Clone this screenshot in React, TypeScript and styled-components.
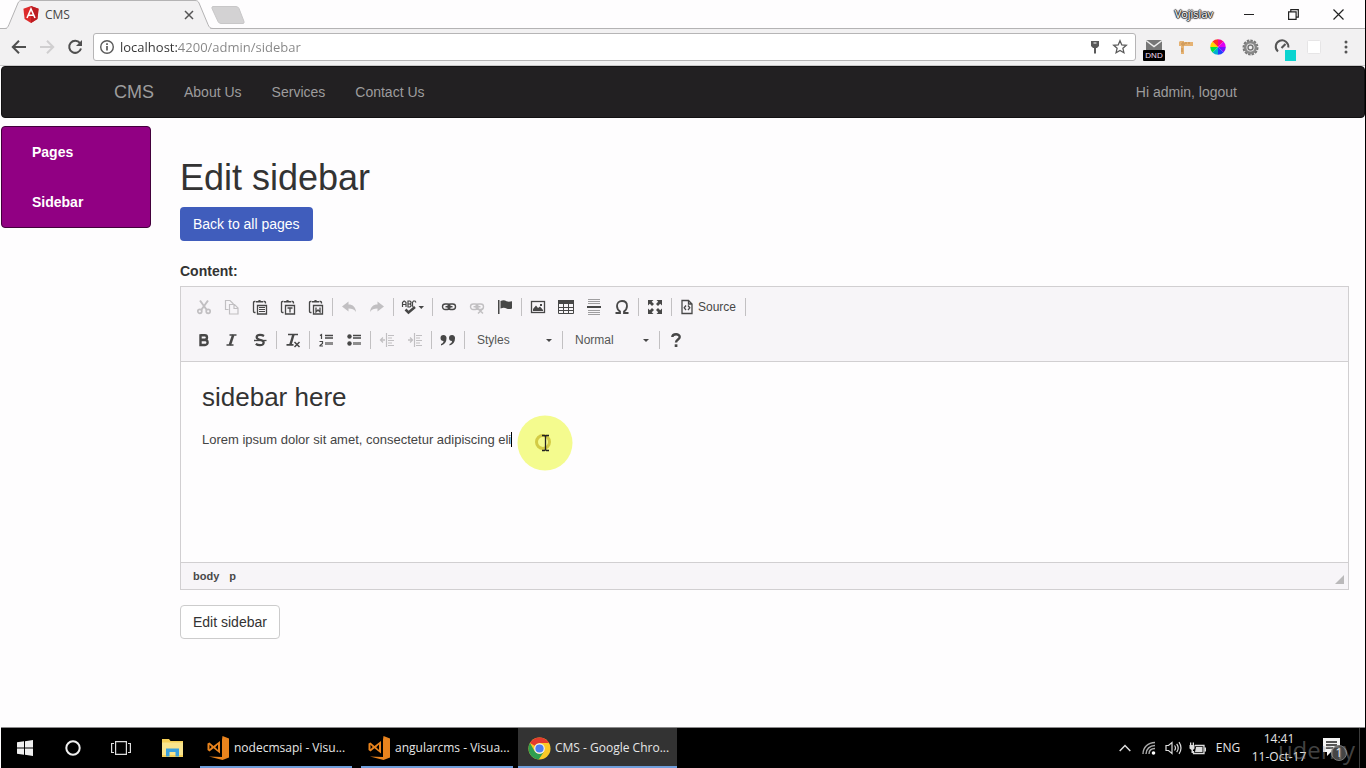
import React from "react";
import styled, { createGlobalStyle, css } from "styled-components";

const PAGE_FONT = `"Liberation Sans", Arial, sans-serif`;
const UI_FONT = `"Open Sans", "Noto Sans", sans-serif`;

const GlobalStyle = createGlobalStyle`
  *, *::before, *::after { box-sizing: border-box; }
  body { margin: 0; background: #fefdfe; font-family: ${PAGE_FONT}; font-size: 14px; line-height: 20px; color: #333; }
  button, input, select { font: inherit; color: inherit; margin: 0; }
  svg { display: block; flex: none; }
`;

const Screen = styled.div`
  display: flex;
  flex-direction: column;
  min-height: 100vh;
  overflow: hidden;
  border-right: 1px solid #000;
`;

/* ---------- browser chrome ---------- */

const TabStrip = styled.header`
  display: flex;
  height: 29px;
  border-bottom: 1px solid #b4b3b4;
  font: 12px/28px ${UI_FONT};
`;

const Tab = styled.div`
  position: relative;
  display: flex;
  align-items: center;
  width: 211px;
  height: 29px;
  padding: 0 16px 0 23px;
  gap: 6px;
  > * { position: relative; }
`;

const TabShape = styled.svg`
  && { position: absolute; left: 0; top: 0; }
`;

const TabTitle = styled.span`
  flex: 1;
  color: #444;
`;

const BareButton = styled.button`
  display: flex;
  align-items: center;
  justify-content: center;
  padding: 0;
  border: 0;
  background: none;
`;

const NewTab = styled(BareButton)`
  width: 34px;
  height: 30px;
`;

const WindowControls = styled.div`
  display: flex;
  align-items: center;
  margin-left: auto;
  padding-right: 4px;
  height: 28px;
`;

const ProfileName = styled.span`
  margin-right: 13px;
  font: 11px/16px ${UI_FONT};
  color: #fff;
  text-shadow: 0 0 1px #222, 1px 0 1px #222, -1px 0 1px #222, 0 1px 1px #333, 0 -1px 1px #333;
`;

const WindowButton = styled(BareButton)`
  width: 45px;
  height: 26px;
`;

const AddressBar = styled.div`
  display: flex;
  align-items: center;
  height: 37px;
  padding: 0 3px 0 5px;
  background: #f2f1f2;
  border-bottom: 1px solid #c9c8c9;
`;

const NavButton = styled(BareButton)`
  width: 28px;
  height: 28px;
`;

const Omnibox = styled.label`
  display: flex;
  flex: 1;
  align-items: center;
  height: 28px;
  margin: 0 2px 0 4px;
  padding: 0 4px 0 5px;
  gap: 5px;
  background: #fff;
  border: 1px solid #b6b5b6;
  border-radius: 3px;
`;

const UrlInput = styled.input`
  flex: 1;
  min-width: 0;
  padding: 0;
  border: 0;
  outline: 0;
  font: 13px/20px ${UI_FONT};
  color: #777;
  background: linear-gradient(to right, #333 57px, #858585 57px);
  background-clip: text;
  -webkit-text-fill-color: transparent;
`;

const Extension = styled(BareButton)`
  width: 32px;
  height: 28px;
`;

/* ---------- web page ---------- */

const Navbar = styled.nav`
  height: 52px;
  margin-left: 1px;
  background: #222022;
  border: 1px solid #121112;
  border-radius: 4px;
`;

const Container = styled.div`
  display: flex;
  max-width: 1170px;
  margin: 0 auto;
  padding: 0 16px;
`;

const NavLink = styled.a<{ $brand?: boolean; $end?: boolean }>`
  padding: 15px;
  line-height: 20px;
  text-decoration: none;
  color: #9d9c9d;
  ${(p) => p.$brand && css`padding-left: 0; font-size: 18px;`}
  ${(p) => p.$end && css`margin-left: auto;`}
`;

const Body = styled.div`
  display: flex;
  flex: 1;
  align-items: flex-start;
  padding: 8px 16px 32px 1px;
  gap: 29px;
`;

const SideMenu = styled.nav`
  display: flex;
  flex: none;
  flex-direction: column;
  width: 150px;
  background: #910083;
  border: 1px solid #43003c;
  border-radius: 4px;
`;

const SideLink = styled.a`
  padding: 15px 30px;
  font-weight: bold;
  color: #fff;
  text-decoration: none;
`;

const Main = styled.main`
  flex: 1;
  min-width: 0;
  padding-top: 32px;
`;

const Title = styled.h1`
  margin: 0 0 9px;
  font-size: 36px;
  font-weight: normal;
  line-height: 40px;
`;

const BackLink = styled.a`
  display: inline-block;
  padding: 7px 13px;
  border-radius: 4px;
  background: #405dbc;
  color: #fff;
  text-decoration: none;
`;

const FieldLabel = styled.div`
  margin: 20px 0 5px;
  font-weight: bold;
`;

const Editor = styled.section`
  border: 1px solid #d1cfd1;
`;

const Toolbar = styled.div`
  display: flex;
  flex-direction: column;
  gap: 5px;
  padding: 6px 9px 7px;
  background: #f7f5f8;
  border-bottom: 1px solid #d1cfd1;
  font-size: 12px;
`;

const ToolRow = styled.div`
  display: flex;
  align-items: center;
  height: 28px;
`;

const Separator = styled.span`
  width: 1px;
  height: 18px;
  margin: 0 2px;
  background: #c2c0c2;
`;

const ToolButton = styled.button<{ $width?: number }>`
  display: flex;
  flex: none;
  align-items: center;
  justify-content: center;
  gap: 5px;
  width: ${(p) => p.$width ?? 28}px;
  height: 28px;
  padding: 0;
  border: 0;
  background: none;
  color: #474747;
  &:disabled { opacity: 0.3; }
`;

const Combo = styled.label<{ $width: number }>`
  display: flex;
  align-items: center;
  width: ${(p) => p.$width}px;
  padding: 0 8px 0 10px;
  color: #555;
`;

const ComboSelect = styled.select`
  flex: 1;
  min-width: 0;
  padding: 0;
  border: 0;
  background: none;
  appearance: none;
`;

const EditArea = styled.div`
  position: relative;
  height: 200px;
  padding: 20px 21px;
  background: #fefdfe;
  font-size: 13px;
  outline: 0;
`;

const DocHeading = styled.h2`
  margin: 0 0 18px;
  font-size: 26px;
  font-weight: normal;
  line-height: 30px;
`;

const DocText = styled.p`
  margin: 0;
  color: #444;
`;

const Caret = styled.span`
  border-left: 1px solid #000;
`;

const Pointer = styled.svg`
  position: absolute;
  left: 336px;
  top: 53px;
`;

const StatusBar = styled.footer`
  display: flex;
  align-items: center;
  height: 27px;
  padding: 0 3px 0 12px;
  gap: 10px;
  background: #f7f5f8;
  border-top: 1px solid #d1cfd1;
  font-size: 11px;
  font-weight: bold;
  color: #484848;
  svg { margin: 8px 0 0 auto; }
`;

const SubmitButton = styled.button`
  margin-top: 15px;
  padding: 6px 12px;
  border: 1px solid #ccc;
  border-radius: 4px;
  background: #fff;
`;

/* ---------- taskbar ---------- */

const Taskbar = styled.footer`
  display: flex;
  height: 41px;
  margin-left: 1px;
  border-top: 1px solid #8b8a8b;
  background: #000;
  color: #e6e6e6;
  font: 12px/16px ${UI_FONT};
`;

const TaskIcon = styled(BareButton)<{ $width?: number }>`
  width: ${(p) => p.$width ?? 48}px;
`;

const TaskApp = styled.button<{ $active?: boolean; $gap: number }>`
  display: flex;
  align-items: center;
  justify-content: flex-start;
  width: ${(p) => (p.$active ? 159 : 152)}px;
  margin-left: ${(p) => p.$gap}px;
  padding: 2px 4px 0 ${(p) => (p.$active ? 10 : 6)}px;
  gap: 4px;
  border: 0;
  border-bottom: 2px solid #6f9edb;
  background: ${(p) => (p.$active ? "#333" : "#000")};
  white-space: nowrap;
`;

const Tray = styled.div`
  position: relative;
  display: flex;
  align-items: center;
  margin-left: auto;
  padding-right: 5px;
`;

const TrayItem = styled.span<{ $width: number }>`
  display: flex;
  justify-content: center;
  width: ${(p) => p.$width}px;
`;

const Clock = styled.time`
  width: 64px;
  line-height: 18px;
  text-align: center;
  white-space: nowrap;
`;

const ActionCenter = styled.span`
  display: flex;
  justify-content: center;
  width: 49px;
  height: 40px;
  align-items: center;
  border-right: 1px solid #3c3c3c;
`;

const Watermark = styled.span`
  position: absolute;
  right: 10px;
  top: 4px;
  color: rgba(160, 160, 160, 0.42);
  font: 24px/36px ${UI_FONT};
`;

/* ---------- toolbar icons ---------- */

const Ico = ({ children, w = 16 }: { children: React.ReactNode; w?: number }) => (
  <svg width={w} height="16" viewBox={`0 0 ${w} 16`} fill="none" stroke="currentColor" aria-hidden="true">
    {children}
  </svg>
);

const Solid = ({ d }: { d: string }) => <path d={d} fill="currentColor" stroke="none" />;

const Clipboard = ({ children }: { children: React.ReactNode }) => (
  <Ico>
    <path d="M3.500 13.500h-1a1 1 0 0 1-1-1v-9a1 1 0 0 1 1-1h1M11.500 2.500h1a1 1 0 0 1 1 1v1" strokeWidth="1.300" />
    <Solid d="M4 3.500V2h2a1.600 1.600 0 0 1 3 0h2v1.500z" />
    <path d="M5.500 6.500h9v8.500h-9z" strokeWidth="1.300" />
    {children}
  </Ico>
);

const Cut = () => (
  <Ico>
    <path d="M4 1.500 10.800 11M12 1.500 5.200 11" strokeWidth="2" />
    <circle cx="3.800" cy="12.300" r="2" strokeWidth="1.700" />
    <circle cx="12.200" cy="12.300" r="2" strokeWidth="1.700" />
  </Ico>
);
const Copy = () => (
  <Ico>
    <path d="M4.500 10.500H1.500v-9H6L9.500 5M5.500 5.500h5l3.500 3.500v6H5.500zM10 5.500v4h4" strokeWidth="1.200" />
  </Ico>
);
const Undo = ({ flip }: { flip?: boolean }) => (
  <Ico>
    <g transform={flip ? "matrix(-1 0 0 1 16 0)" : undefined}>
      <Solid d="M1 7.500 7.500 2.500v3c4.500 0 7 2.500 7.500 7.500-1.800-2.800-4-3.500-7.500-3.500v3z" />
    </g>
  </Ico>
);
const Spell = () => (
  <Ico w={24}>
    <path d="M1.500 8V3.500L3 2h.5L5 3.500V8M1.500 5.500H5M7 8V2h2l1 1v1L9 5l1 1v1L9 8zM7 5h2M15 3.500 14 2h-1.500L11.500 3.500v3l.5 1.500" strokeWidth="1.200" />
    <path d="m4.500 10.500 3 3L14 8" strokeWidth="2.500" />
    <Solid d="M17.500 7h5.500l-2.700 3z" />
  </Ico>
);
const Link = ({ off }: { off?: boolean }) => (
  <Ico>
    <rect x="1.500" y="5" width="7.500" height="5.500" rx="2.700" strokeWidth="1.400" />
    <rect x="7" y="5" width="7.500" height="5.500" rx="2.700" strokeWidth="1.400" />
    <path d="M4.500 7.700h7" strokeWidth="1.500" />
    {off && <path d="m9 9.500 5 5M14 9.500l-5 5" strokeWidth="1.500" />}
  </Ico>
);
const Flag = () => (
  <Ico>
    <Solid d="M1 1h1.500v14H1zM3.500 2c3-1.200 4.500-.5 6 .2 1.500.6 3 .6 5.500 0v7.300c-2.500.8-4 .6-5.500 0-1.500-.7-3-1.200-6 0z" />
  </Ico>
);
const Picture = () => (
  <Ico>
    <rect x="1.500" y="2.500" width="13" height="11" strokeWidth="1.300" />
    <Solid d="M3 12V10l3-3.500 2 2.500 2-1.500 3 3.500v1zM10 5h2v2h-2z" />
  </Ico>
);
const TableIcon = () => (
  <Ico>
    <Solid d="M0 1h16v4H0z" />
    <path d="M.5 2v12.500h15V2M5.500 5v9.500M10.500 5v9.500M.5 8.500h15M.5 11.500h15" />
  </Ico>
);
const Rule = () => (
  <Ico>
    <path d="M2 .5h12M2 2.500h12M2 4.500h12M2 11.500h12M2 13.500h12M2 15.500h12" opacity=".5" />
    <path d="M1 8h14" strokeWidth="2" />
  </Ico>
);
const Omega = () => (
  <Ico>
    <path d="M1.500 14H6v-1.500C4 11 3 9.500 3 7c0-3 2-5 5-5s5 2 5 5c0 2.500-1 4-3 5.500V14h4.500" strokeWidth="1.800" />
  </Ico>
);
const Expand = () => (
  <Ico>
    <Solid d="M1 1h5.500L4.700 2.800 7 5 5 7 2.800 4.700 1 6.500zM15 1v5.500l-1.800-1.800L11 7 9 5l2.200-2.200L9.500 1zM1 15V9.500l1.800 1.800L5 9l2 2-2.300 2.200L6.500 15zM15 15H9.500l1.700-1.800L9 11l2-2 2.200 2.300L15 9.500z" />
  </Ico>
);
const SourceIcon = () => (
  <Ico w={12}>
    <path d="M1 1.500h6.500L11 5v9.500H1zM7.500 1.500V5H11" strokeWidth="1.300" />
    <path d="M5 6.500 3.200 8.800 5 11M7 6.500l1.800 2.300L7 11" strokeWidth="1.300" />
  </Ico>
);
const Bold = () => (
  <Ico>
    <path d="M4.500 3.200h4.300a2.200 2.200 0 0 1 0 4.400H4.500M4.500 8h4.600a2.500 2.500 0 0 1 0 5H4.500zM4.500 2.200v11.600" strokeWidth="2.400" />
  </Ico>
);
const Italic = () => (
  <Ico>
    <path d="M5.500 3h7M2.500 13h7" strokeWidth="1.600" />
    <path d="M9.200 3 5.900 13" strokeWidth="2.500" />
  </Ico>
);
const Strike = () => (
  <Ico>
    <path d="M12 4C10.500 3 9.500 2.800 8 2.800c-4 0-4.500 3.700-1 4.700l2.500.8c3.500 1.200 2.500 4.900-1.500 4.900-1.500 0-3-.4-4.200-1.400" strokeWidth="2.200" />
    <path d="M2 8.500h12.500" strokeWidth="1.300" />
  </Ico>
);
const ClearFormat = () => (
  <Ico>
    <path d="M3 2.500h10M1.500 12.800h7" strokeWidth="1.700" />
    <path d="M8.500 2.500 5.300 13" strokeWidth="2.500" />
    <path d="m9.500 10 5 5M14.500 10l-5 5" strokeWidth="1.500" />
  </Ico>
);
const ListIcon = ({ numbered }: { numbered?: boolean }) => (
  <Ico>
    {numbered ? (
      <path d="M2 3.500 3.500 2.500V7M1.500 9.500h3v2l-2.500 2v.5h3" strokeWidth="1.200" />
    ) : (
      <g fill="currentColor" stroke="none"><circle cx="3.500" cy="4.500" r="2.200" /><circle cx="3.500" cy="11.500" r="2.200" /></g>
    )}
    <path d="M7 3.500h8M7 6h8" strokeWidth="1.300" />
    <path d="M7 11.500h8" strokeWidth="3" opacity=".6" />
  </Ico>
);
const Indent = ({ out }: { out?: boolean }) => (
  <Ico>
    <path d="M7.500 1v14M9 3.500h6M9 6h4M9 8.500h6M9 11h4M9 13.500h6" strokeWidth="1.200" />
    <path d={out ? "M6 8H1.500M4 5.500 1.500 8 4 10.500" : "M1 8h4.500M3 5.500 5.500 8 3 10.500"} strokeWidth="1.300" />
  </Ico>
);
const Quote = () => (
  <Ico>
    <Solid d="M3.500 3A3 3 0 0 1 6.500 6.500C6.500 10 4.500 12.500 1 13.500V12c1.800-.8 2.500-1.600 2.500-3a3 3 0 0 1 0-6zM12 3a3 3 0 0 1 3 3.500c0 3.500-2 6-5.500 7V12c1.800-.8 2.500-1.600 2.500-3a3 3 0 0 1 0-6z" />
  </Ico>
);
const Help = () => (
  <Ico>
    <path d="M4.300 5C4.500 1.500 11.700 1.300 11.700 5 11.700 7.500 8 7.500 8 10.500" strokeWidth="2.400" />
    <Solid d="M6.700 12.300h2.700v2.700H6.700z" />
  </Ico>
);
const Arrow = () => (
  <svg width="6" height="3" viewBox="0 0 6 3" fill="#474747" aria-hidden="true"><path d="M0 0h6L3 3z" /></svg>
);

/* ---------- taskbar icons ---------- */

const CodeLogo = () => (
  <svg width="24" height="24" viewBox="0 0 24 24" fill="#e8831d" aria-hidden="true">
    <path d="M16.500 0 23 2.500v19L16.500 24 3 20.500l13 .5V3.500zM14 5v12.500L7.500 12.300 3.500 15.500 1.500 14V7.500L3.500 6.500l4 3.400zM3.500 8.800v4.500l2.200-2.200zM12 8.500l-2.800 2.700L12 14z" fillRule="evenodd" />
  </svg>
);

const ChromeLogo = () => (
  <svg width="23" height="23" viewBox="0 0 24 24" aria-hidden="true">
    <circle cx="12" cy="12" r="11.500" fill="#fbc926" />
    <path d="M2 6.300A11.500 11.500 0 0 1 22 6.300H12A5.700 5.700 0 0 0 7 9.200z" fill="#e33b2e" />
    <path d="M2 6.300A11.500 11.500 0 0 0 11.200 23.500L16.900 14.900A5.700 5.700 0 0 1 7 14.800z" fill="#2f9e4f" />
    <circle cx="12" cy="12" r="5.500" fill="#f4f4f4" />
    <circle cx="12" cy="12" r="4.300" fill="#4d7df0" />
  </svg>
);

const AngularLogo = () => (
  <svg width="16" height="17" viewBox="0 0 16 17" aria-hidden="true">
    <path d="M8 0 15.600 2.700 14.400 13 8 17 1.600 13 .4 2.700z" fill="#dd2b2b" />
    <path d="M8 0v17l6.400-4 1.200-10.300z" fill="#bd1c22" />
    <path d="M4 12 8 3l4 9M5.800 9.300h4.400" fill="none" stroke="#fff" strokeWidth="1.600" />
  </svg>
);

export default function App() {
  return (
    <>
      <GlobalStyle />
      <Screen>
        <TabStrip>
          <Tab>
            <TabShape width="214" height="29" viewBox="0 0 214 29" aria-hidden="true">
              <path d="M0 28.500h5c2 0 3-1.500 4-4L18 3c1-2 2-2.500 4-2.500h173c2 0 3 .5 4 2.500l9 21.500c1 2.500 2 4 5 4V29H0z" fill="#f2f1f2" stroke="#b4b3b4" />
              <path d="M7 28.500h203" stroke="#f2f1f2" />
            </TabShape>
            <AngularLogo />
            <TabTitle>CMS</TabTitle>
            <BareButton aria-label="Close tab">
              <svg width="12" height="12" viewBox="0 0 12 12" stroke="#555" strokeWidth="1.500"><path d="m2 2 8 8M10 2l-8 8" /></svg>
            </BareButton>
          </Tab>
          <NewTab aria-label="New tab">
            <svg width="34" height="18" viewBox="0 0 34 18"><path d="M2 .5h23q2 0 3 2l5 13q.5 2-1 2H10q-2 0-3-2L1 2.500Q.5.500 2 .5z" fill="#d3d2d3" stroke="#c8c7c8" /></svg>
          </NewTab>
          <WindowControls>
            <ProfileName>Vojislav</ProfileName>
            <WindowButton aria-label="Minimize">
              <svg width="10" height="10" viewBox="0 0 10 10" stroke="#222"><path d="M0 5.500h10" /></svg>
            </WindowButton>
            <WindowButton aria-label="Restore">
              <svg width="11" height="11" viewBox="0 0 11 11" stroke="#222" strokeWidth="1.200" fill="none"><path d="M.6 2.800h7.500v7.500H.6zM2.800 2.500V.6h7.500v7.500H8.500" /></svg>
            </WindowButton>
            <WindowButton aria-label="Close">
              <svg width="11" height="11" viewBox="0 0 11 11" stroke="#222" strokeWidth="1.200"><path d="m.5.5 10 10M10.500.5l-10 10" /></svg>
            </WindowButton>
          </WindowControls>
        </TabStrip>

        <AddressBar>
          <NavButton aria-label="Back">
            <svg width="16" height="16" viewBox="0 0 16 16" fill="none" stroke="#4f4f4f" strokeWidth="2"><path d="M15 8H2.500M8 1.800 1.800 8 8 14.200" /></svg>
          </NavButton>
          <NavButton aria-label="Forward">
            <svg width="16" height="16" viewBox="0 0 16 16" fill="none" stroke="#d0cfd0" strokeWidth="2"><path d="M1 8h12.500M8 1.800 14.200 8 8 14.200" /></svg>
          </NavButton>
          <NavButton aria-label="Reload">
            <svg width="16" height="16" viewBox="0 0 16 16" fill="none" stroke="#4f4f4f" strokeWidth="2"><path d="M13 4.200A6 6 0 1 0 14 9.500" /><path d="M15 1v6H9z" fill="#4f4f4f" stroke="none" /></svg>
          </NavButton>
          <Omnibox>
            <svg width="16" height="16" viewBox="0 0 16 16" fill="none" stroke="#5a5a5a" strokeWidth="1.400" aria-hidden="true"><circle cx="8" cy="8" r="6.300" /><path d="M8 7v4.500M8 4.300V6" strokeWidth="1.700" /></svg>
            <UrlInput aria-label="Address" defaultValue="localhost:4200/admin/sidebar" />
            <svg width="10" height="14" viewBox="0 0 10 14" aria-hidden="true"><path d="M1 1h8v5L7 8H6v5.500H4V8H3L1 6z" fill="#5a5a5a" /><path d="M3.500 3h3" stroke="#fff" /></svg>
            <svg width="26" height="16" viewBox="-6 0 26 16" fill="none" stroke="#5a5a5a" strokeWidth="1.300" aria-hidden="true"><path d="m9 1.700 1.800 4.200 4.500.4-3.400 3 1 4.400L9 11.400l-3.900 2.300 1-4.400-3.400-3 4.500-.4z" /></svg>
          </Omnibox>
          <Extension aria-label="Mail checker">
            <svg width="22" height="28" viewBox="0 0 22 28">
              <path d="M3 7h16v10H3z" fill="#777" /><path d="m3 7.500 8 6 8-6" fill="none" stroke="#eee" strokeWidth="1.500" />
              <rect y="17" width="22" height="11" rx="1" fill="#000" />
              <text x="11" y="25" textAnchor="middle" fontSize="8" fontFamily="Liberation Sans, sans-serif" fill="#f3dff5">DND</text>
            </svg>
          </Extension>
          <Extension aria-label="Ruler">
            <svg width="16" height="16" viewBox="0 0 16 16"><path d="M2 2h4v1h9v4H6v8H3V7H1V3z" fill="#e5b273" /><path d="M4 4h2v2H4zM8 3v2M11 3v2M3 10h2M3 12h2" stroke="#c48b49" fill="#f5d4a5" /></svg>
          </Extension>
          <Extension aria-label="Color picker">
            <svg width="16" height="16" viewBox="-8 -8 16 16">
              {["#fa0090", "#e000f0", "#7a10ff", "#2040ff", "#00b0d0", "#00e040", "#ffd400", "#ff3020"].map((c, i) => (
                <path key={c} d="M0 0V-7.800A7.800 7.800 0 0 1 5.500-5.500z" fill={c} transform={`rotate(${i * 45})`} />
              ))}
            </svg>
          </Extension>
          <Extension aria-label="Settings">
            <svg width="17" height="17" viewBox="-8.500 -8.500 17 17" fill="none" stroke="#777">
              <circle r="6.500" strokeWidth="3" strokeDasharray="2.300 1" /><circle r="5.300" strokeWidth="2.500" stroke="#888" /><circle r="2.500" strokeWidth="1.500" />
            </svg>
          </Extension>
          <Extension aria-label="Page speed">
            <svg width="28" height="28" viewBox="0 0 28 28">
              <path d="M10 18.500A6.300 6.300 0 1 1 20.300 14.500" fill="none" stroke="#555" strokeWidth="2" /><path d="m13.500 15 4-4" stroke="#555" strokeWidth="2.200" />
              <rect x="17" y="17" width="11" height="11" fill="#0bd4d0" />
            </svg>
          </Extension>
          <Extension aria-label="Blank extension">
            <svg width="14" height="14" viewBox="0 0 14 14"><rect x=".5" y=".5" width="13" height="13" rx="1" fill="#fff" stroke="#e6e5e6" /></svg>
          </Extension>
          <Extension aria-label="Menu">
            <svg width="4" height="14" viewBox="0 0 4 14" fill="#555"><circle cx="2" cy="2" r="1.500" /><circle cx="2" cy="7" r="1.500" /><circle cx="2" cy="12" r="1.500" /></svg>
          </Extension>
        </AddressBar>

        <Navbar>
          <Container>
            <NavLink $brand href="#cms">CMS</NavLink>
            <NavLink href="#about">About Us</NavLink>
            <NavLink href="#services">Services</NavLink>
            <NavLink href="#contact">Contact Us</NavLink>
            <NavLink $end href="#logout">Hi admin, logout</NavLink>
          </Container>
        </Navbar>

        <Body>
          <SideMenu>
            <SideLink href="#pages">Pages</SideLink>
            <SideLink href="#sidebar">Sidebar</SideLink>
          </SideMenu>
          <Main>
            <Title>Edit sidebar</Title>
            <BackLink href="#pages">Back to all pages</BackLink>
            <FieldLabel id="content-label">Content:</FieldLabel>
            <Editor>
              <Toolbar role="toolbar">
                <ToolRow>
                  <ToolButton disabled aria-label="Cut"><Cut /></ToolButton>
                  <ToolButton disabled aria-label="Copy"><Copy /></ToolButton>
                  <ToolButton aria-label="Paste"><Clipboard><path d="M7 8.500h6M7 10.500h6M7 12.500h6" /></Clipboard></ToolButton>
                  <ToolButton aria-label="Paste as plain text"><Clipboard><path d="M7.500 9h5M10 9v4.500" strokeWidth="1.300" /></Clipboard></ToolButton>
                  <ToolButton aria-label="Paste from Word"><Clipboard><path d="M8 8.500V13l2-2 2 2V8.500" strokeWidth="1.300" /></Clipboard></ToolButton>
                  <Separator />
                  <ToolButton disabled aria-label="Undo"><Undo /></ToolButton>
                  <ToolButton disabled aria-label="Redo"><Undo flip /></ToolButton>
                  <Separator />
                  <ToolButton $width={34} aria-label="Spell check"><Spell /></ToolButton>
                  <Separator />
                  <ToolButton aria-label="Link"><Link /></ToolButton>
                  <ToolButton disabled aria-label="Unlink"><Link off /></ToolButton>
                  <ToolButton aria-label="Anchor"><Flag /></ToolButton>
                  <Separator />
                  <ToolButton aria-label="Image"><Picture /></ToolButton>
                  <ToolButton aria-label="Table"><TableIcon /></ToolButton>
                  <ToolButton aria-label="Horizontal line"><Rule /></ToolButton>
                  <ToolButton aria-label="Special character"><Omega /></ToolButton>
                  <Separator />
                  <ToolButton aria-label="Maximize"><Expand /></ToolButton>
                  <Separator />
                  <ToolButton $width={69}><SourceIcon />Source</ToolButton>
                  <Separator />
                </ToolRow>
                <ToolRow>
                  <ToolButton aria-label="Bold"><Bold /></ToolButton>
                  <ToolButton aria-label="Italic"><Italic /></ToolButton>
                  <ToolButton aria-label="Strikethrough"><Strike /></ToolButton>
                  <Separator />
                  <ToolButton aria-label="Remove format"><ClearFormat /></ToolButton>
                  <Separator />
                  <ToolButton aria-label="Numbered list"><ListIcon numbered /></ToolButton>
                  <ToolButton aria-label="Bulleted list"><ListIcon /></ToolButton>
                  <Separator />
                  <ToolButton disabled aria-label="Decrease indent"><Indent out /></ToolButton>
                  <ToolButton disabled aria-label="Increase indent"><Indent /></ToolButton>
                  <Separator />
                  <ToolButton aria-label="Block quote"><Quote /></ToolButton>
                  <Separator />
                  <Combo $width={93}>
                    <ComboSelect aria-label="Formatting styles"><option>Styles</option></ComboSelect>
                    <Arrow />
                  </Combo>
                  <Separator />
                  <Combo $width={92}>
                    <ComboSelect aria-label="Paragraph format"><option>Normal</option></ComboSelect>
                    <Arrow />
                  </Combo>
                  <Separator />
                  <ToolButton aria-label="About"><Help /></ToolButton>
                </ToolRow>
              </Toolbar>
              <EditArea contentEditable suppressContentEditableWarning role="textbox" aria-labelledby="content-label" spellCheck={false}>
                <DocHeading>sidebar here</DocHeading>
                <DocText>Lorem ipsum dolor sit amet, consectetur adipiscing eli<Caret /></DocText>
                <Pointer width="56" height="56" viewBox="0 0 56 56" fill="none" aria-hidden="true">
                  <circle cx="28" cy="28" r="27.500" fill="#f4fb8e" />
                  <circle cx="26" cy="27" r="6.500" stroke="#d3cb45" strokeWidth="3" />
                  <path d="M25 20.500h2.500l1 1 1-1H32M28.500 21v14M25 35.500h2.500l1-1 1 1H32" stroke="#222" strokeWidth="1.300" />
                </Pointer>
              </EditArea>
              <StatusBar>
                <span>body</span>
                <span>p</span>
                <svg width="11" height="10" viewBox="0 0 11 10" fill="#bab9ba" aria-hidden="true"><path d="M10 0v9H1z" /></svg>
              </StatusBar>
            </Editor>
            <SubmitButton type="submit">Edit sidebar</SubmitButton>
          </Main>
        </Body>

        <Taskbar>
          <TaskIcon aria-label="Start">
            <svg width="16" height="16" viewBox="0 0 16 16" fill="#f0f0f0"><path d="M0 2.300 7 1.300V7.600H0zM8 1.200 16 0v7.600H8zM0 8.500h7v6.200l-7-1zM8 8.500h8V16l-8-1.200z" /></svg>
          </TaskIcon>
          <TaskIcon aria-label="Search">
            <svg width="16" height="16" viewBox="0 0 16 16" fill="none" stroke="#f0f0f0" strokeWidth="2"><circle cx="8" cy="8" r="6.700" /></svg>
          </TaskIcon>
          <TaskIcon aria-label="Task view">
            <svg width="20" height="14" viewBox="0 0 20 14" fill="none" stroke="#ddd" strokeWidth="1.200"><path d="M4.600.6h10.800v12.800H4.600zM3 2.500H.6v9H3M17 2.500h2.400v9H17" /></svg>
          </TaskIcon>
          <TaskIcon $width={54} aria-label="File Explorer">
            <svg width="21" height="18" viewBox="0 0 21 18"><path d="M0 0h7l1.500 2H21v16H0z" fill="#f5cf57" /><path d="M0 3.500h21V16H0z" fill="#f9e48c" /><path d="M4 17.500V9.500h13v8h-3.500V13h-6v4.500z" fill="#3aa0dd" /></svg>
          </TaskIcon>
          <TaskApp $gap={1}><CodeLogo />nodecmsapi - Visu...</TaskApp>
          <TaskApp $gap={9}><CodeLogo />angularcms - Visua...</TaskApp>
          <TaskApp $gap={5} $active><ChromeLogo />CMS - Google Chro...</TaskApp>
          <Tray>
            <TrayItem $width={24}>
              <svg width="12" height="8" viewBox="0 0 12 8" fill="none" stroke="#ddd" strokeWidth="1.500"><path d="m.7 7 5.300-5.500L11.300 7" /></svg>
            </TrayItem>
            <TrayItem $width={24}>
              <svg width="14" height="14" viewBox="0 0 14 14" fill="none" stroke="#aaa" strokeWidth="1.400"><path d="M1 13C1 6.500 6 1.500 13 1.500M4 13c0-5 4-8.500 9-8.500M7 13c0-3.500 2.500-5.500 6-5.500" /><circle cx="11.500" cy="12" r="1.800" fill="#fff" stroke="none" /></svg>
            </TrayItem>
            <TrayItem $width={24}>
              <svg width="17" height="14" viewBox="0 0 17 14" fill="none" stroke="#ddd" strokeWidth="1.200"><path d="M1 4.500h2.500L7 1.500v11l-3.500-3H1zM9.500 4.500q2 2.500 0 5M11.700 2.800q3 4.200 0 8.400M14 1.200q4 5.800 0 11.600" /></svg>
            </TrayItem>
            <TrayItem $width={24}>
              <svg width="17" height="13" viewBox="0 0 17 13"><path d="M6 3.500h9v8H4.500V9" fill="none" stroke="#ddd" strokeWidth="1.300" /><path d="M7 5h6.500v5H6zM15.500 5.500H17v4h-1.500zM.5 3h5v3.500L4 8v3H2.500V8L.5 6.500zM1 .5h1.300V3H1zM3.700.5H5V3H3.700z" fill="#ddd" /></svg>
            </TrayItem>
            <TrayItem $width={38}>ENG</TrayItem>
            <Clock>14:41<br />11-Oct-17</Clock>
            <ActionCenter>
              <svg width="26" height="26" viewBox="0 0 26 26" aria-hidden="true">
                <path d="M1 3h17v14h-9l-4 4v-4H1z" fill="#f4f4f4" /><path d="M4 7h11M4 10h11M4 13h7" stroke="#222" strokeWidth="1.300" />
                <circle cx="17" cy="18" r="7.500" fill="#454545" stroke="#777" />
                <text x="17" y="22" textAnchor="middle" fontSize="12" fill="#fff" fontFamily="Open Sans, sans-serif">1</text>
              </svg>
            </ActionCenter>
            <Watermark aria-hidden="true">udemy</Watermark>
          </Tray>
        </Taskbar>
      </Screen>
    </>
  );
}
